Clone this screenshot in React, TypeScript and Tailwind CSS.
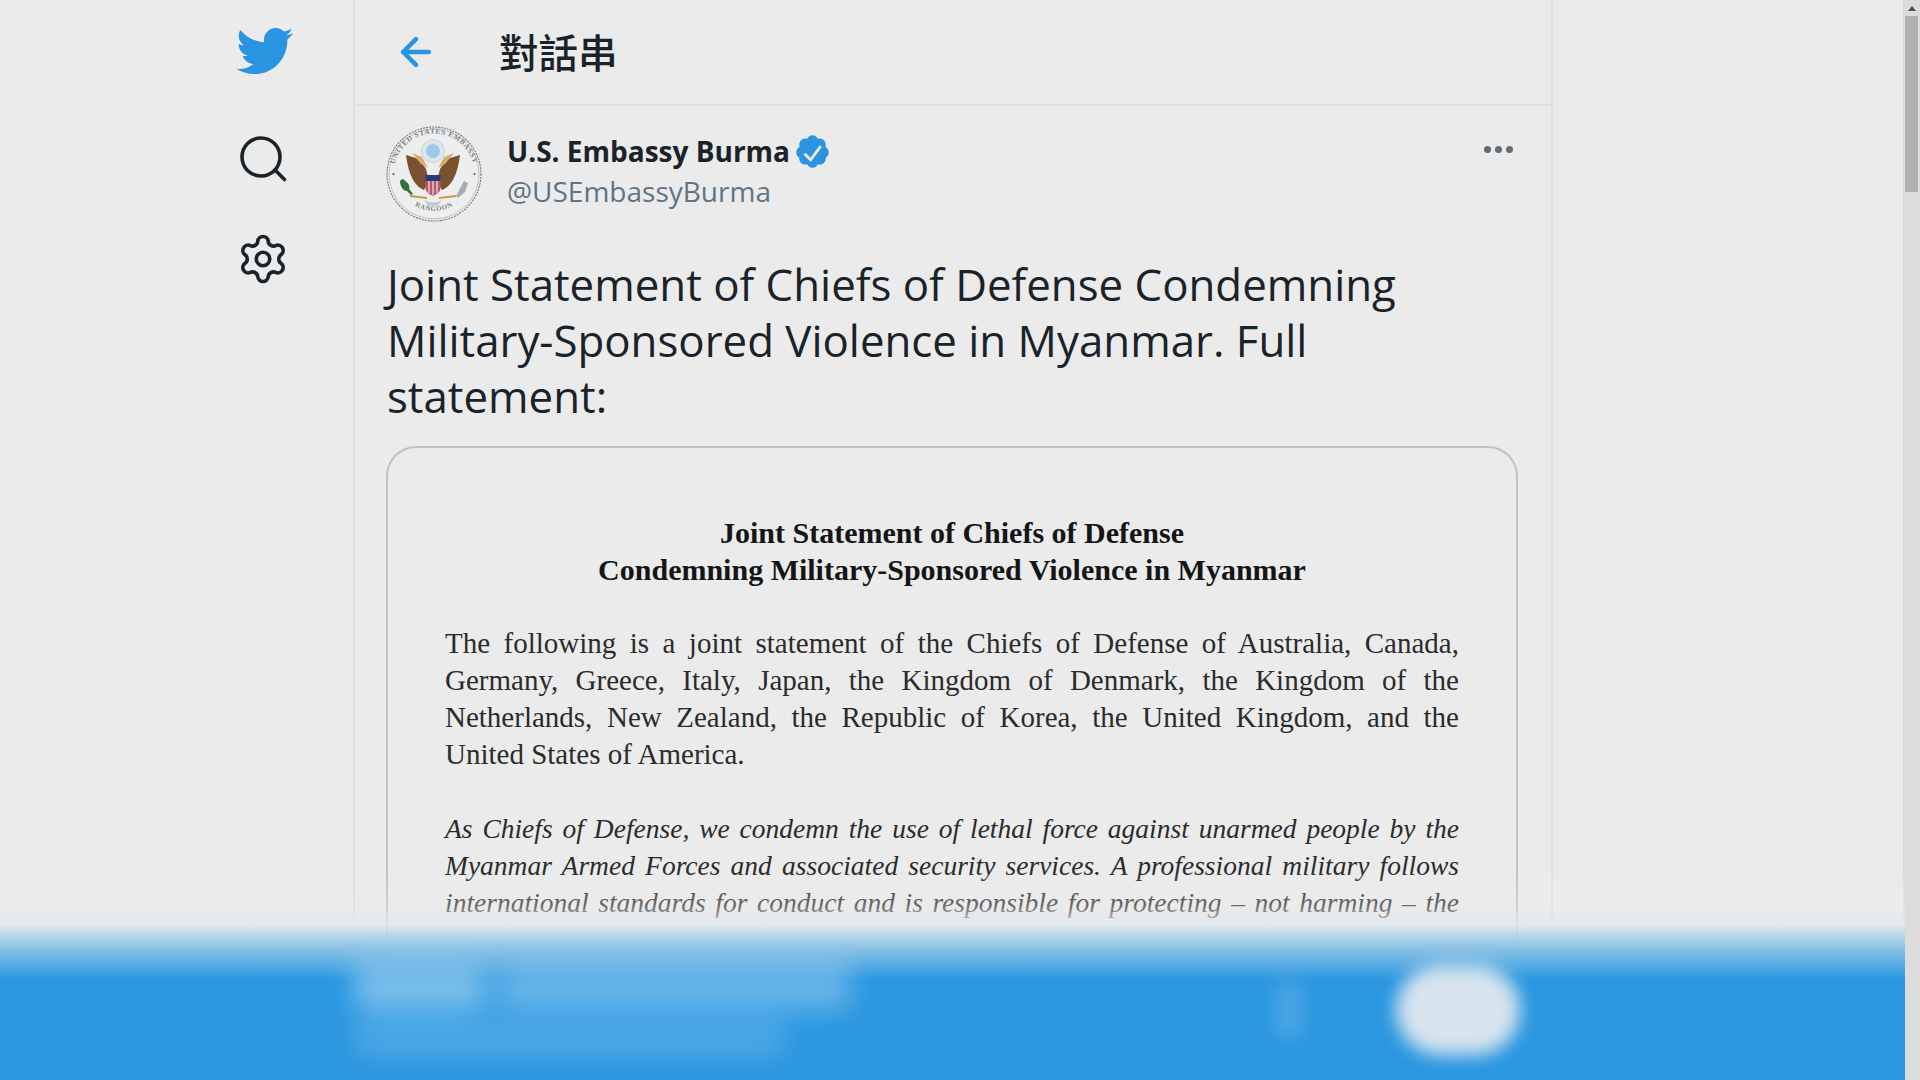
import React from 'react';
import { ArrowLeft, Settings } from 'lucide-react';

const HEADING = ['Joint Statement of Chiefs of Defense', 'Condemning Military-Sponsored Violence in Myanmar'];

const INTRO = [
  'The following is a joint statement of the Chiefs of Defense of Australia, Canada,',
  'Germany, Greece, Italy, Japan, the Kingdom of Denmark, the Kingdom of the',
  'Netherlands, New Zealand, the Republic of Korea, the United Kingdom, and the',
];

const BODY = [
  'As Chiefs of Defense, we condemn the use of lethal force against unarmed people by the',
  'Myanmar Armed Forces and associated security services. A professional military follows',
  'international standards for conduct and is responsible for protecting – not harming – the',
];

const TwitterBird = () => (
  <svg viewBox="0 0 24 24" className="w-[60px] h-[60px] fill-[#2a94e0]">
    <path d="M23.643 4.937c-.835.37-1.732.62-2.675.733.962-.576 1.7-1.49 2.048-2.578-.9.534-1.897.922-2.958 1.13-.85-.904-2.06-1.47-3.4-1.47-2.572 0-4.658 2.086-4.658 4.66 0 .364.042.718.12 1.06-3.873-.195-7.304-2.05-9.602-4.868-.4.69-.63 1.49-.63 2.342 0 1.616.823 3.043 2.072 3.878-.764-.025-1.482-.234-2.11-.583v.06c0 2.257 1.605 4.14 3.737 4.568-.392.106-.803.162-1.227.162-.3 0-.593-.028-.877-.082.593 1.85 2.313 3.198 4.352 3.234-1.595 1.25-3.604 1.995-5.786 1.995-.376 0-.747-.022-1.112-.065 2.062 1.323 4.51 2.093 7.14 2.093 8.57 0 13.255-7.098 13.255-13.254 0-.2-.005-.402-.014-.602.91-.658 1.7-1.477 2.323-2.41z" />
  </svg>
);

const SearchIcon = () => (
  <svg viewBox="0 0 48 48" className="w-[48px] h-[48px] fill-none stroke-[#1a2329]" strokeWidth="3.6" strokeLinecap="round">
    <circle cx="22" cy="22" r="19" />
    <path d="M36 35l9.5 9.5" />
  </svg>
);

const VerifiedBadge = () => (
  <svg viewBox="0 0 24 24" className="w-[37px] h-[37px]">
    <path
      fill="#2a94e0"
      d="M22.5 12.5c0-1.58-.875-2.95-2.148-3.6.154-.435.238-.905.238-1.4 0-2.21-1.71-3.998-3.818-3.998-.47 0-.92.084-1.336.25C14.818 2.415 13.51 1.5 12 1.5s-2.816.917-3.437 2.25c-.415-.165-.866-.25-1.336-.25-2.11 0-3.818 1.79-3.818 4 0 .494.083.964.237 1.4-1.272.65-2.147 2.018-2.147 3.6 0 1.495.782 2.798 1.942 3.486-.02.17-.032.34-.032.514 0 2.21 1.708 4 3.818 4 .47 0 .92-.086 1.335-.25.62 1.334 1.926 2.25 3.437 2.25 1.512 0 2.818-.916 3.437-2.25.415.163.865.248 1.336.248 2.11 0 3.818-1.79 3.818-4 0-.174-.012-.344-.033-.513 1.158-.687 1.943-1.99 1.943-3.484z"
    />
    <path fill="#ebebeb" d="M16.6 7.9l-5.9 8.1-3.2-3.2-1.3 1.3 4.7 4.7 7.2-9.8z" />
  </svg>
);

// rough redraw of the embassy seal
const Seal = () => (
  <svg viewBox="0 0 96 96" className="w-[96px] h-[96px] shrink-0">
    <defs>
      <path id="seal-top" d="M7.5 48a40.5 40.5 0 0 1 81 0" />
      <path id="seal-bottom" d="M12 58a37.5 37.5 0 0 0 72 0" />
    </defs>
    <circle cx="48" cy="48" r="47" fill="#eeeeee" stroke="#6f777c" strokeWidth="1.1" strokeDasharray="2 1" />
    <circle cx="48" cy="48" r="45" fill="none" stroke="#9aa0a5" strokeWidth="0.6" />
    <text fontSize="7.4" fontWeight="700" fill="#7a8085" fontFamily="'Liberation Serif', serif" letterSpacing="0.55">
      <textPath href="#seal-top" startOffset="50%" textAnchor="middle">UNITED STATES EMBASSY</textPath>
    </text>
    <text fontSize="6.8" fontWeight="700" fill="#7a8085" fontFamily="'Liberation Serif', serif" letterSpacing="0.7">
      <textPath href="#seal-bottom" startOffset="50%" textAnchor="middle">RANGOON</textPath>
    </text>
    <circle cx="7.5" cy="48" r="1" fill="#555" />
    <circle cx="88.5" cy="48" r="1" fill="#555" />
    <circle cx="47" cy="25" r="11.5" fill="#dbe7ef" stroke="#c4ccd2" strokeWidth="0.8" />
    <circle cx="47" cy="25" r="7" fill="#9ccbea" />
    <path d="M20 29l13 4 7 10 3 12-5 9c-9-4-15-13-18-35z" fill="#7a5230" />
    <path d="M74 29l-13 4-7 10-3 12 5 9c9-4 15-13 18-35z" fill="#7a5230" />
    <path d="M26 27l10 4 6 11-7-4zM68 27l-10 4-6 11 7-4z" fill="#d6b06a" />
    <circle cx="47" cy="43" r="3.8" fill="#efeee8" />
    <path d="M39.5 49h15v13c0 4-3.5 6-7.500 8-4-2-7.500-4-7.500-8z" fill="#b8566a" />
    <path d="M39.5 49h15v6h-15z" fill="#2b3a78" />
    <path d="M43 55v12M47 55v14M51 55v12" stroke="#e9e6e6" strokeWidth="1.2" />
    <path d="M14 55c2-3 5-2 6 1 3 1 4 5 3 7l4 5-2 1-4-4c-4 0-7-5-7-10z" fill="#2f6f3c" />
    <path d="M70 70l8-15 4 2-3 9-7 6z" fill="#a9adb0" />
    <path d="M24 70l17 2M70 70l-17 2" stroke="#c29b45" strokeWidth="1.8" />
    <path d="M38 74c5 3 13 3 18 0l-4 6H42z" fill="#c6cacd" />
  </svg>
);

export default function App() {
  return (
    <div className="relative flex h-screen w-full overflow-hidden bg-[#ebebeb] text-[#1a2329] font-['Open_Sans','Noto_Sans_CJK_TC',sans-serif]">
      <aside className="w-[353px] shrink-0 flex flex-col items-end pr-[67px] pt-[21px]">
        <div className="mr-[-8px]"><TwitterBird /></div>
        <div className="mt-[54px] mr-[-1px]"><SearchIcon /></div>
        <div className="mt-[49px] mr-[-4px]"><Settings size={54} strokeWidth={1.6} color="#1a2329" /></div>
      </aside>

      <main className="w-[1200px] shrink-0 h-full border-x-2 border-[#dedede]">
        <header className="flex h-[106px] items-center border-b-2 border-[#dedede] pl-[39px]">
          <ArrowLeft size={44} strokeWidth={2.5} color="#2a94e0" />
          <h1 className="ml-[61px] mt-[-3px] text-[39.5px] font-medium leading-none font-['Noto_Sans_CJK_TC',sans-serif]">對話串</h1>
        </header>

        <section className="pl-[31px] pr-[33px] pt-[20px]">
          <div className="flex items-start">
            <Seal />
            <div className="ml-[25px] pt-[3px]">
              <div className="flex items-center h-[44px]">
                <span className="text-[28px] font-bold leading-none">U.S. Embassy Burma</span>
                <span className="ml-[4px]"><VerifiedBadge /></span>
              </div>
              <div className="text-[28px] leading-[36px] text-[#5f7485]">@USEmbassyBurma</div>
            </div>
            <div className="ml-auto mr-[5px] mt-[20px] flex gap-[4px]">
              <span className="h-[7px] w-[7px] rounded-full bg-[#5f6b75]" />
              <span className="h-[7px] w-[7px] rounded-full bg-[#5f6b75]" />
              <span className="h-[7px] w-[7px] rounded-full bg-[#5f6b75]" />
            </div>
          </div>

          <p className="mt-[34px] ml-[1px] w-[1120px] text-[43.8px] leading-[56px] text-[#1a2329]">
            Joint Statement of Chiefs of Defense Condemning
            <br />
            Military-Sponsored Violence in Myanmar. Full
            <br />
            statement:
          </p>

          <div className="mt-[22px] h-[700px] w-[1132px] rounded-[30px] border-2 border-b-0 border-[#bcc3c8] px-[57px] pt-[66px] font-['Liberation_Serif',serif] text-[29px] leading-[37px] text-[#2b2b2b]">
            {HEADING.map((line) => (
              <div key={line} className="text-center text-[30px] font-bold text-[#151515]">{line}</div>
            ))}
            <div className="mt-[37px]">
              {INTRO.map((line) => (
                <div key={line} className="text-justify [text-align-last:justify]">{line}</div>
              ))}
              <div>United States of America.</div>
            </div>
            <div className="mt-[37px] text-[27.5px] italic">
              {BODY.map((line) => (
                <div key={line} className="text-justify [text-align-last:justify]">{line}</div>
              ))}
            </div>
          </div>
        </section>
      </main>

      {/* scrollbar */}
      <div className="absolute right-0 top-0 bottom-0 flex w-[17px] flex-col items-center bg-[#dcdcdc]">
        <div className="mt-[6px] h-0 w-0 border-x-[4px] border-b-[5px] border-x-transparent border-b-[#505050]" />
        <div className="mt-[5px] h-[176px] w-[13px] bg-[#b0b0b0]" />
      </div>

      {/* blurred bottom banner */}
      <div className="absolute bottom-0 left-0 right-[15px] h-[210px] bg-[linear-gradient(to_bottom,rgba(235,235,235,0)_0px,rgba(235,235,235,0.32)_35px,rgba(225,232,238,0.85)_54px,rgba(130,190,230,0.97)_80px,#2a97e0_110px)]">
        <div className="flex h-full items-start pl-[355px] pr-[385px] pt-[95px]">
          <div className="flex flex-col gap-[12px] blur-[14px]">
            <div className="flex h-[44px] w-[495px] gap-[14px]">
              <div className="h-full w-[130px] bg-white/40" />
              <div className="h-full flex-1 bg-white/30" />
            </div>
            <div className="h-[34px] w-[430px] bg-white/18" />
          </div>
          <div className="ml-auto flex items-center gap-[92px]">
            <div className="h-[60px] w-[30px] rounded-full bg-white/15 blur-[10px]" />
            <div className="h-[90px] w-[124px] rounded-full bg-[#d8e4ee] blur-[9px]" />
          </div>
        </div>
      </div>
    </div>
  );
}
